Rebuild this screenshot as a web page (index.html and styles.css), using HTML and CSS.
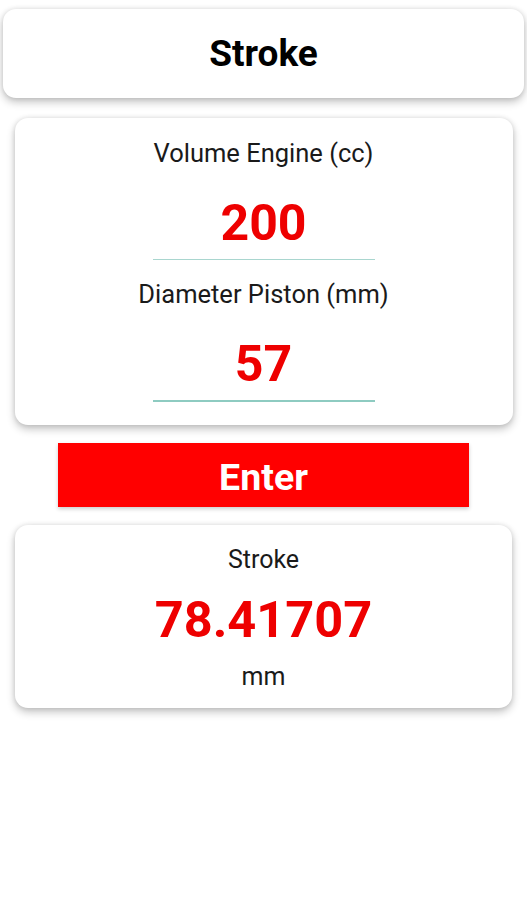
FILE: index.html
```html
<!DOCTYPE html>
<html>
    <head>
        <link rel="stylesheet" href="styles.css">
    </head>
    <body>
        <div class="screen">
            <div class="card title-card">
                <h1 class="title">Stroke</h1>
            </div>

            <div class="card input-card">
                <div class="field">
                    <div class="field-label">Volume Engine (cc)</div>
                    <div class="field-value">200</div>
                </div>
                <div class="field field-focused">
                    <div class="field-label">Diameter Piston (mm)</div>
                    <div class="field-value">57</div>
                </div>
            </div>

            <a href="#" class="enter-button">Enter</a>

            <div class="card result-card">
                <div class="result-label">Stroke</div>
                <div class="result-value">78.41707</div>
                <div class="result-unit">mm</div>
            </div>
        </div>
    </body>
</html>
```

FILE: styles.css
```css
* {
    margin: 0;
    padding: 0;
    box-sizing: border-box;
    font-family: Roboto, 'Noto Sans', sans-serif;
}

body {
    background: #fff;
    width: 527px;
    height: 900px;
    overflow: hidden;
}

.screen {
    display: flex;
    flex-direction: column;
    align-items: center;
    padding-top: 9px;
}

.card {
    background: #fff;
    border-radius: 13px;
    box-shadow: 0 4px 8px rgba(0, 0, 0, 0.24), 0 0 5px rgba(0, 0, 0, 0.1);
}

.title-card {
    width: 521px;
    height: 89px;
    display: flex;
    justify-content: center;
    align-items: center;
}

.title {
    font-size: 37px;
    font-weight: 700;
    color: #000;
}

.input-card {
    margin-top: 20px;
    width: 498px;
    height: 307px;
    padding-top: 20px;
    display: flex;
    flex-direction: column;
    align-items: center;
}

.field {
    display: flex;
    flex-direction: column;
    align-items: center;
    width: 222px;
    border-bottom: 1px solid #a9d6cf;
}

.field + .field {
    margin-top: 19px;
}

.field-focused {
    border-bottom: 2px solid #8ecbc1;
}

.field-label {
    font-size: 25.5px;
    color: #1a1a1a;
    white-space: nowrap;
    line-height: 30px;
}

.field-value {
    margin-top: 19px;
    font-size: 50px;
    font-weight: 700;
    color: #ee0000;
    line-height: 72px;
}

.enter-button {
    margin-top: 18px;
    width: 411px;
    height: 64px;
    padding-top: 4px;
    background: #ff0000;
    color: #fff;
    font-size: 37.5px;
    font-weight: 700;
    text-decoration: none;
    display: flex;
    justify-content: center;
    align-items: center;
    box-shadow: 0 2px 4px rgba(0, 0, 0, 0.2);
}

.result-card {
    margin-top: 18px;
    width: 497px;
    height: 183px;
    display: flex;
    flex-direction: column;
    align-items: center;
    padding-top: 20px;
}

.result-label {
    font-size: 25px;
    color: #1a1a1a;
    line-height: 30px;
}

.result-value {
    margin-top: 13px;
    font-size: 50.5px;
    font-weight: 700;
    color: #ee0000;
    line-height: 64px;
}

.result-unit {
    margin-top: 10px;
    font-size: 25px;
    color: #1a1a1a;
    line-height: 30px;
}
```
